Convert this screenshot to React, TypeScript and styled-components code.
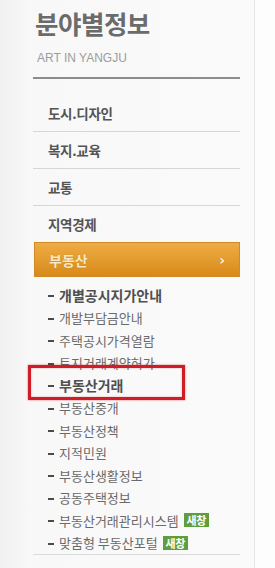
import React from 'react';
import styled, {createGlobalStyle} from 'styled-components';

const GlobalStyle = createGlobalStyle`
  html, body {
    margin: 0;
    padding: 0;
    background: #fdfdfd;
  }
  body {
    font-family: 'Noto Sans CJK KR', 'Noto Sans', sans-serif;
  }
`;

const Panel = styled.aside`
  width: 255px;
  min-height: 568px;
  box-sizing: border-box;
  border-right: 1px solid #e4e4e4;
  background: linear-gradient(to right, #f1f1f1 0px, #f8f8f8 30px, #fafafa 100%);
  padding: 8px 0 0 33px;
`;

const Inner = styled.div`
  width: 207px;
`;

const Header = styled.header`
  border-bottom: 2px solid #8c8c8c;
  padding-bottom: 12px;
`;

const Title = styled.h1`
  margin: 0 0 13px 2px;
  font-size: 25.5px;
  line-height: 30px;
  font-weight: 700;
  color: #6b6b6b;
  letter-spacing: -0.5px;
`;

const Subtitle = styled.div`
  margin-left: 4px;
  font-family: 'Liberation Sans', Arial, sans-serif;
  font-size: 12px;
  line-height: 14px;
  color: #9c9c9c;
`;

const Menu = styled.ul`
  list-style: none;
  margin: 16px 0 0;
  padding: 0;
`;

const MenuItem = styled.li<{$last?: boolean}>`
  height: 36px;
  display: flex;
  align-items: center;
  padding-left: 15px;
  border-bottom: ${p => (p.$last ? 'none' : '1px solid #d6d6d6')};
  font-size: 13.5px;
  font-weight: 700;
  color: #545454;
  letter-spacing: -0.3px;
`;

const ActiveBar = styled.div`
  height: 35px;
  margin-left: 1px;
  box-sizing: border-box;
  border: 1px solid #d08a26;
  background: linear-gradient(to bottom, #eeac45 0%, #e39c2e 50%, #d9891a 100%);
  display: flex;
  align-items: center;
  justify-content: space-between;
  padding: 0 14px 0 14px;
  color: #f8e8c4;
  font-size: 14px;
  font-weight: 700;
  text-shadow: 0 0 1px rgba(150, 80, 0, 0.4);
`;

const Chevron = styled.span`
  font-family: 'DejaVu Sans', sans-serif;
  font-size: 14px;
  color: #fff6e4;
`;

const SubList = styled.ul`
  list-style: none;
  margin: 0;
  padding: 7px 0 0;
  border-bottom: 1px solid #dcdcdc;
`;

const SubItem = styled.li<{$bold?: boolean}>`
  position: relative;
  height: 22.5px;
  display: flex;
  align-items: center;
  padding-left: 26px;
  font-size: ${p => (p.$bold ? '14px' : '13px')};
  font-weight: ${p => (p.$bold ? 700 : 400)};
  color: ${p => (p.$bold ? '#4f4f4f' : '#6a6a6a')};
  letter-spacing: 0;
  white-space: pre;

  &::before {
    content: '';
    position: absolute;
    left: 15px;
    top: 11px;
    width: 6px;
    height: 2px;
    background: #4a4a4a;
  }
`;

const Highlight = styled.span`
  position: absolute;
  left: -5px;
  top: -9px;
  width: 157px;
  height: 35px;
  box-sizing: border-box;
  border: 3px solid #cf1d27;
  box-shadow: 0 0 2px rgba(200, 20, 30, 0.6), inset 0 0 2px rgba(200, 20, 30, 0.4);
`;

const Badge = styled.span`
  display: inline-block;
  margin-left: 5px;
  padding: 0 3px;
  height: 14px;
  line-height: 14px;
  font-size: 11px;
  font-weight: 700;
  color: #fff;
  background: #5f9e3e;
  letter-spacing: -0.5px;
`;

const menus = ['도시.디자인', '복지.교육', '교통', '지역경제'];

type Sub = {label: string; bold?: boolean; boxed?: boolean; isNew?: boolean};

const subs: Sub[] = [
  {label: '개별공시지가안내', bold: true},
  {label: '개발부담금안내'},
  {label: '주택공시가격열람'},
  {label: '토지거래계약허가'},
  {label: '부동산거래', bold: true, boxed: true},
  {label: '부동산중개'},
  {label: '부동산정책'},
  {label: '지적민원'},
  {label: '부동산생활정보'},
  {label: '공동주택정보'},
  {label: '부동산거래관리시스템', isNew: true},
  {label: '맞춤형 부동산포털', isNew: true},
];

export default function App() {
  return (
    <>
      <GlobalStyle />
      <Panel>
        <Inner>
          <Header>
            <Title>분야별정보</Title>
            <Subtitle>ART IN YANGJU</Subtitle>
          </Header>
          <Menu>
            {menus.map((m, i) => (
              <MenuItem key={m} $last={i === menus.length - 1}>
                {m}
              </MenuItem>
            ))}
          </Menu>
          <ActiveBar>
            <span>부동산</span>
            <Chevron>›</Chevron>
          </ActiveBar>
          <SubList>
            {subs.map(s => (
              <SubItem key={s.label} $bold={s.bold}>
                {s.label}
                {s.isNew && <Badge>새창</Badge>}
                {s.boxed && <Highlight />}
              </SubItem>
            ))}
          </SubList>
        </Inner>
      </Panel>
    </>
  );
}
